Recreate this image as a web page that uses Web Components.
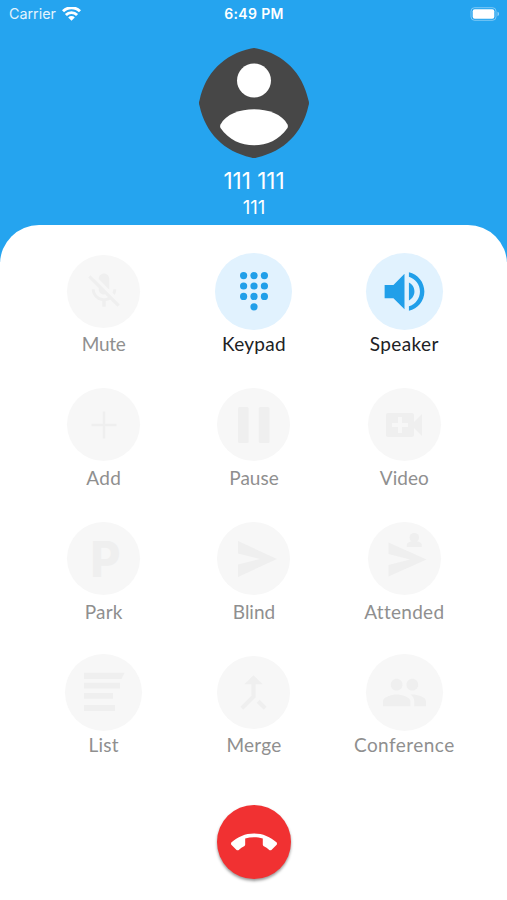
<!DOCTYPE html>
<html lang="en">
<head>
<meta charset="utf-8">
<meta name="viewport" content="width=device-width, initial-scale=1">
<title>Call</title>
<style>
  html, body {
    margin: 0;
    height: 100%;
    overflow: hidden;
    background: #fff;
  }
</style>
</head>
<body>
<call-screen></call-screen>
<script>
// 24px icons, drawn at the size given by the action
const material = (size, path) =>
  `<svg width="${size}" height="${size}" viewBox="0 0 24 24" fill="currentColor"><path d="${path}"/></svg>`;
// icons drawn around the centre of the button
const centred = (content) =>
  `<svg width="60" height="60" viewBox="-30 -30 60 60" fill="currentColor">${content}</svg>`;

const dots = [[-10.4, -15.4], [0, -15.4], [10.4, -15.4], [-10.4, -5], [0, -5], [10.4, -5], [-10.4, 5.4], [0, 5.4], [10.4, 5.4], [0, 15.8]];

const icons = {
  mute: material(42, 'M19 11h-1.7c0 .74-.16 1.43-.43 2.05l1.23 1.23c.56-.98.9-2.09.9-3.28zm-4.02.17c0-.06.02-.11.02-.17V5c0-1.66-1.34-3-3-3S9 3.34 9 5v.18l5.98 5.99zM4.27 3L3 4.27l6.01 6.01V11c0 1.66 1.33 3 2.99 3 .22 0 .44-.03.65-.08l1.66 1.66c-.71.33-1.5.52-2.31.52-2.76 0-5.3-2.1-5.3-5.1H5c0 3.41 2.72 6.23 6 6.72V21h2v-3.28c.91-.13 1.77-.45 2.54-.9L19.73 21 21 19.73 4.27 3z'),
  keypad: centred(dots.map(([x, y]) => `<circle cx="${x}" cy="${y}" r="3.6"/>`).join('')),
  speaker: material(53, 'M3 9v6h4l5 5V4L7 9H3zm13.5 3c0-1.77-1.02-3.29-2.5-4.03v8.05c1.48-.73 2.5-2.25 2.5-4.02zM14 3.23v2.06c2.89.86 5 3.54 5 6.71s-2.11 5.85-5 6.71v2.06c4.01-.91 7-4.49 7-8.77s-2.99-7.86-7-8.77z'),
  add: centred('<path d="M-12.5 0h25M0-13.5v27" stroke="currentColor" stroke-width="2.4"/>'),
  pause: centred('<rect x="-16" y="-18" width="10.7" height="36" rx="1.5"/><rect x="4.8" y="-18" width="10.7" height="36" rx="1.5"/>'),
  video: material(48, 'M17 10.5V7c0-.55-.45-1-1-1H4c-.55 0-1 .45-1 1v10c0 .55.45 1 1 1h12c.55 0 1-.45 1-1v-3.5l4 4v-11l-4 4zM14 13h-3v3H9v-3H6v-2h3V8h2v3h3v2z'),
  park: centred('<text x="-13.5" y="18" font-family="Inter, sans-serif" font-weight="800" font-size="49" textLength="30" lengthAdjust="spacingAndGlyphs">P</text>'),
  blind: centred('<path d="M-16-18L23 0-16 18V5.5L6 0-16-5.5z"/>'),
  attended: centred('<path d="M-15.5-16.5L22.5 0.5-15.5 17.5V6L6 0.5-15.5-5z"/><circle cx="10.3" cy="-21.3" r="4.8"/><path d="M2.8-12v-2c0-2.5 4-4 7.5-4s7.5 1.5 7.5 4v2z"/>'),
  list: centred('<path d="M-20-19.3h40.5l-3 6.3h-37.5zM-20-9.3h36v5.8h-36zM-20 1h29v5.8h-29zM-20 13h31v6h-31z"/>'),
  merge: material(49, 'M17 20.41L18.41 19 15 15.59 13.59 17 17 20.41zM7.5 8H11v5.59L5.59 19 7 20.41l6-6V8h3.5L12 3.5 7.5 8z'),
  conference: material(47, 'M16 11c1.66 0 2.99-1.34 2.99-3S17.66 5 16 5c-1.66 0-3 1.34-3 3s1.34 3 3 3zm-8 0c1.66 0 2.99-1.34 2.99-3S9.66 5 8 5C6.34 5 5 6.34 5 8s1.34 3 3 3zm0 2c-2.33 0-7 1.17-7 3.5V19h14v-2.5c0-2.33-4.67-3.5-7-3.5zm8 0c-.29 0-.62.02-.97.05 1.16.84 1.97 1.97 1.97 3.45V19h6v-2.5c0-2.33-4.67-3.5-7-3.5z'),
};

class StatusBar extends HTMLElement {
  constructor() {
    super();
    this.attachShadow({ mode: 'open' });
    this.shadowRoot.innerHTML = `
      <style>
        :host {
          display: grid;
          grid-template-columns: 1fr auto 1fr;
          align-items: center;
          height: 27px;
          padding: 0 7px 0 9px;
          color: #fff;
          font: 400 14.3px/27px Inter, sans-serif;
        }
        .carrier {
          display: flex;
          align-items: center;
          gap: 6px;
        }
        .carrier span {
          opacity: 0.88;
        }
        .time {
          font-weight: 600;
          font-size: 14px;
          letter-spacing: 0.35px;
          margin-right: 1px;
        }
        .battery {
          justify-self: end;
        }
        svg {
          display: block;
        }
      </style>
      <div class="carrier">
        <span>Carrier</span>
        <svg width="19" height="14" viewBox="0 0 19 14" fill="none" stroke="#fff" stroke-width="2.9">
          <path d="M1 4.3a12 12 0 0 1 17 0M3.9 8a7.9 7.9 0 0 1 11.2 0"/>
          <path d="M6.2 10.5a4.6 4.6 0 0 1 6.6 0L9.5 13.8z" fill="#fff" stroke="none"/>
        </svg>
      </div>
      <div class="time">6:49 PM</div>
      <svg class="battery" width="30" height="14" viewBox="0 0 30 14">
        <rect x="1" y="0.7" width="25" height="12.6" rx="3.5" fill="none" stroke="#fff" stroke-opacity="0.4"/>
        <rect x="2.7" y="2.2" width="21.6" height="9.6" rx="2" fill="#fff"/>
        <path d="M27.5 4.8c2 .6 2 3.8 0 4.4z" fill="#fff" fill-opacity="0.5"/>
      </svg>
    `;
  }
}

class CallerCard extends HTMLElement {
  constructor() {
    super();
    this.attachShadow({ mode: 'open' });
    this.shadowRoot.innerHTML = `
      <style>
        :host {
          display: flex;
          flex-direction: column;
          align-items: center;
          padding: 20.4px 0 0 1px;
          color: #fff;
          font-family: Inter, sans-serif;
        }
        svg {
          display: block;
        }
        .name {
          margin-top: 7.6px;
          font-size: 22.5px;
          line-height: 28px;
        }
        .number {
          font-size: 18.5px;
          line-height: 24px;
        }
      </style>
      <svg width="112" height="112" viewBox="-56 -56 112 112">
        <path d="M-3-54.4Q0-55.6 3-54.4C30-48.5 48.5-30 54.4-3Q55.6 0 54.4 3C48.5 30 30 48.5 3 54.4Q0 55.6-3 54.4C-30 48.5-48.5 30-54.4 3Q-55.6 0-54.4-3C-48.5-30-30-48.5-3-54.4z" fill="#474747"/>
        <circle cy="-22.5" r="17" fill="#fff"/>
        <path d="M-33.5 21.5C-28 11-14 6.3 0 6.3S28 11 33.5 21.5Q34.3 23.3 33.5 25C25 37 13 42.3 0 42.3S-25 37-33.5 25Q-34.3 23.3-33.5 21.5z" fill="#fff"/>
      </svg>
      <div class="name"><slot name="name"></slot></div>
      <div class="number"><slot name="number"></slot></div>
    `;
  }
}

class CallAction extends HTMLElement {
  constructor() {
    super();
    this.attachShadow({ mode: 'open' });
  }

  connectedCallback() {
    this.render();
  }

  render() {
    const size = this.getAttribute('size') || 73;
    const spacing = this.getAttribute('spacing') || 0;
    this.shadowRoot.innerHTML = `
      <style>
        :host {
          display: flex;
          flex-direction: column;
          align-items: center;
          color: #8f8f8f;
          font: 400 19px/24px Lato, sans-serif;
          letter-spacing: ${spacing}px;
          white-space: nowrap;
        }
        :host([active]) {
          color: #202124;
        }
        .holder {
          display: grid;
          place-items: center;
          height: 80px;
          padding-bottom: 1px;
        }
        .circle {
          display: grid;
          place-items: center;
          width: ${size}px;
          height: ${size}px;
          border-radius: 50%;
          background: #f7f7f7;
          color: #efefef;
          letter-spacing: 0;
        }
        :host([active]) .circle {
          background: #e1f2fe;
          color: #219fe9;
        }
        svg {
          display: block;
        }
      </style>
      <div class="holder"><div class="circle">${icons[this.getAttribute('icon')]}</div></div>
      <slot></slot>
    `;
  }
}

class HangupButton extends HTMLElement {
  constructor() {
    super();
    this.attachShadow({ mode: 'open' });
    this.shadowRoot.innerHTML = `
      <style>
        :host {
          display: grid;
          place-items: center;
          width: 74px;
          height: 74px;
          border-radius: 50%;
          background: #f13132;
          box-shadow: 0 2px 3px rgba(0, 0, 0, 0.4);
          color: #fff;
        }
        svg {
          display: block;
        }
      </style>
      ${material(46, 'M12 9.5c-1.6 0-3.15.25-4.6.72v3.1c0 .39-.23.74-.56.9-.98.49-1.87 1.12-2.66 1.85-.18.18-.43.28-.7.28-.28 0-.53-.11-.71-.29L.29 13.58c-.18-.17-.29-.42-.29-.7 0-.28.11-.53.29-.71C3.34 9.28 7.46 7.5 12 7.5s8.66 1.78 11.71 4.67c.18.18.29.43.29.71 0 .28-.11.53-.29.71l-2.48 2.48c-.18.18-.43.29-.71.29-.27 0-.52-.11-.7-.28-.79-.74-1.69-1.36-2.67-1.85-.33-.16-.56-.5-.56-.9v-3.1C15.15 9.75 13.6 9.5 12 9.5z')}
    `;
  }
}

class CallScreen extends HTMLElement {
  constructor() {
    super();
    this.attachShadow({ mode: 'open' });
    this.shadowRoot.innerHTML = `
      <style>
        :host {
          display: flex;
          flex-direction: column;
          height: 900px;
          background: linear-gradient(#25a4ef 262px, #fff 262px);
        }
        header {
          height: 225.4px;
        }
        main {
          flex: 1;
          display: flex;
          flex-direction: column;
          align-items: center;
          border-radius: 39px 39px 0 0;
          background: #fff;
        }
        .actions {
          display: grid;
          grid-template-columns: repeat(3, 150.3px);
          grid-auto-rows: 133.7px;
          margin: 25.8px 0 0 1px;
        }
        hangup-button {
          margin-top: 19px;
        }
      </style>
      <header>
        <status-bar></status-bar>
        <caller-card>
          <span slot="name">111 111</span>
          <span slot="number">111</span>
        </caller-card>
      </header>
      <main>
        <div class="actions">
          <call-action icon="mute" spacing="-0.3">Mute</call-action>
          <call-action icon="keypad" size="77" spacing="0.3" active>Keypad</call-action>
          <call-action icon="speaker" size="77" spacing="0.4" active>Speaker</call-action>
          <call-action icon="add" spacing="0.3">Add</call-action>
          <call-action icon="pause">Pause</call-action>
          <call-action icon="video">Video</call-action>
          <call-action icon="park" spacing="0.2">Park</call-action>
          <call-action icon="blind">Blind</call-action>
          <call-action icon="attended" spacing="0.3">Attended</call-action>
          <call-action icon="list" size="77" spacing="0.2">List</call-action>
          <call-action icon="merge" spacing="0.2">Merge</call-action>
          <call-action icon="conference" size="77" spacing="0.45">Conference</call-action>
        </div>
        <hangup-button></hangup-button>
      </main>
    `;
  }
}

customElements.define('status-bar', StatusBar);
customElements.define('caller-card', CallerCard);
customElements.define('call-action', CallAction);
customElements.define('hangup-button', HangupButton);
customElements.define('call-screen', CallScreen);
</script>
</body>
</html>
